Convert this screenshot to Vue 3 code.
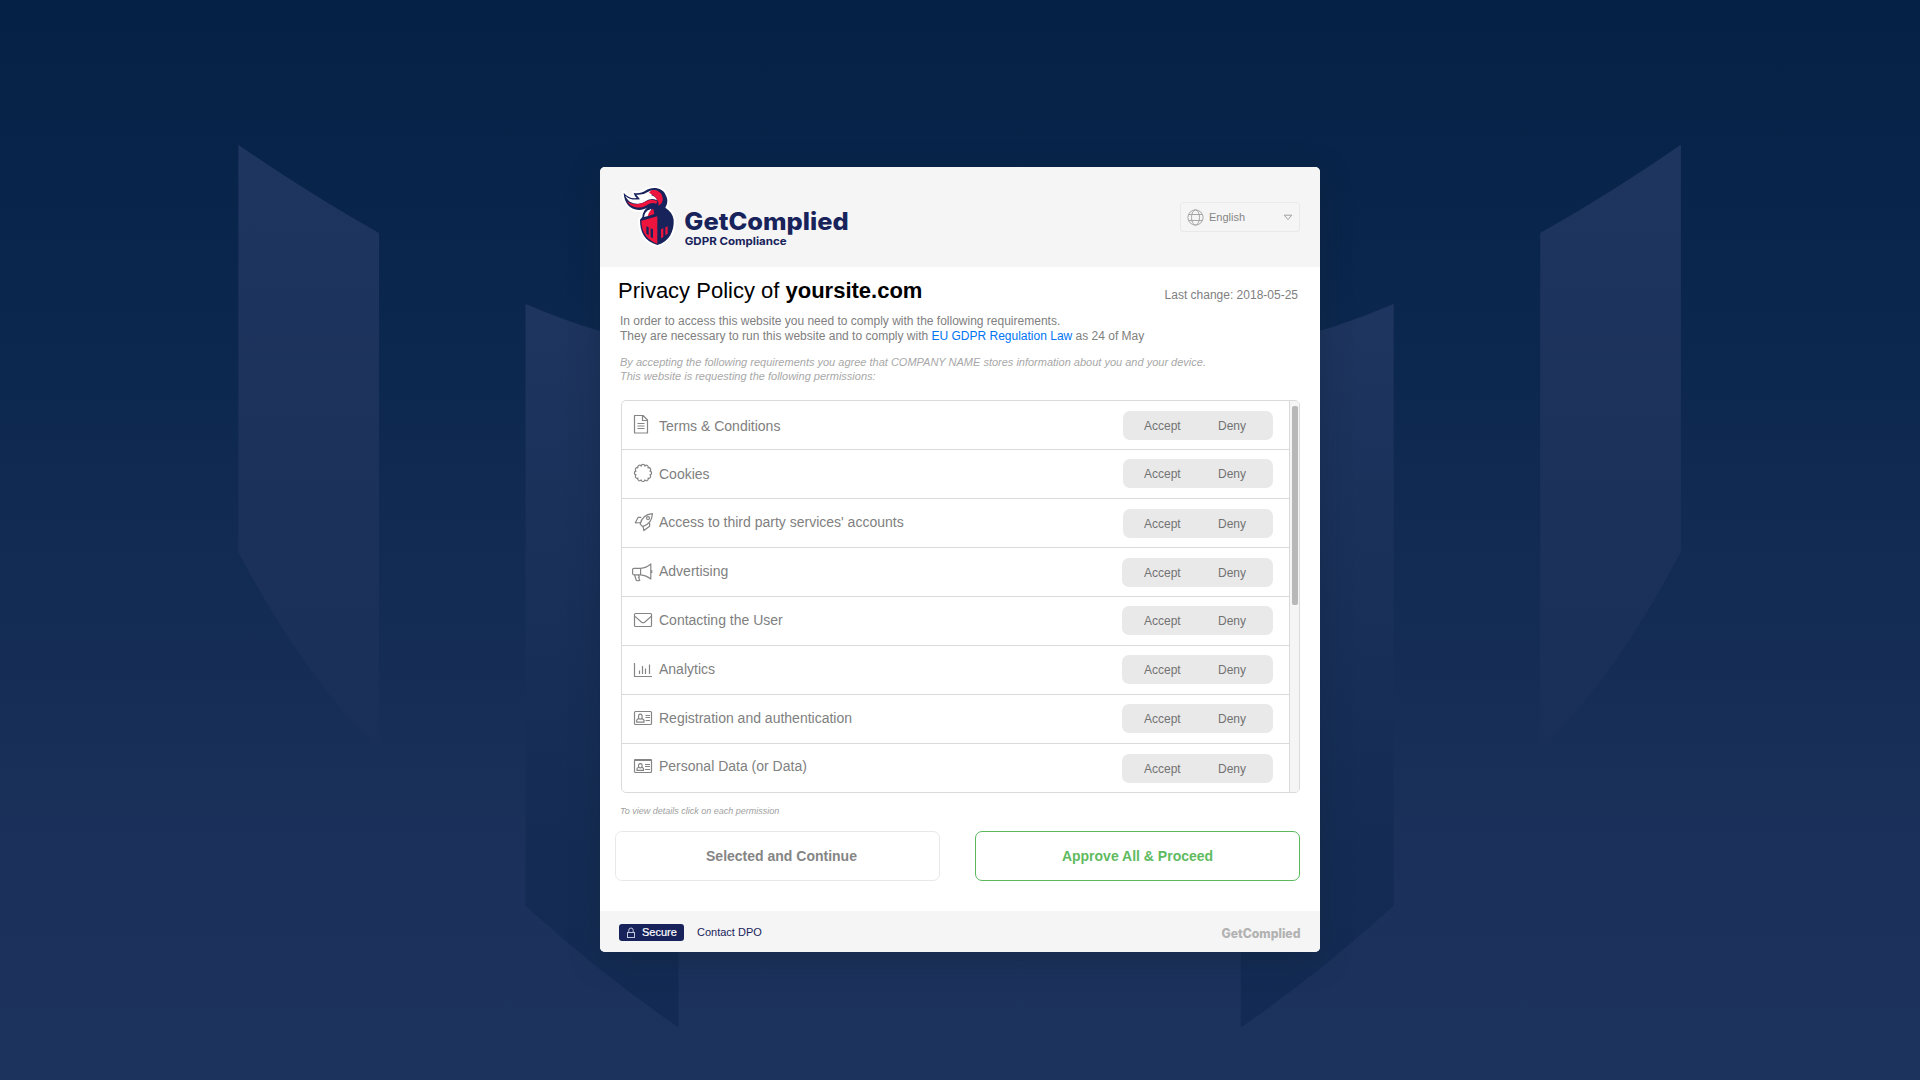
<script setup>
const permissions = [
  { icon: 'document', label: 'Terms & Conditions', text: 1, pill: 10, wide: false },
  { icon: 'cookie', label: 'Cookies', text: 0, pill: 9, wide: false },
  { icon: 'rocket', label: "Access to third party services' accounts", text: -1, pill: 10, wide: false },
  { icon: 'megaphone', label: 'Advertising', text: -1, pill: 10, wide: true },
  { icon: 'envelope', label: 'Contacting the User', text: -1, pill: 9, wide: true },
  { icon: 'chart', label: 'Analytics', text: -1, pill: 9, wide: true },
  { icon: 'card', label: 'Registration and authentication', text: -1, pill: 9, wide: true },
  { icon: 'badge', label: 'Personal Data (or Data)', text: -2, pill: 10, wide: true },
]

const cookiePath = (() => {
  const n = 12
  const pt = (i) => {
    const a = (i / n) * Math.PI * 2 - Math.PI / 2 + Math.PI / n
    return `${(13 + 7.2 * Math.cos(a)).toFixed(2)} ${(23 + 7.2 * Math.sin(a)).toFixed(2)}`
  }
  let d = `M${pt(0)}`
  for (let i = 1; i <= n; i++) d += `A1.9 2.1 ${((i - 0.5) / n) * 360 + 15} 0 1 ${pt(i)}`
  return d + 'Z'
})()
</script>

<template>
  <div class="page">
    <svg class="backdrop" viewBox="0 0 1920 1080" aria-hidden="true">
      <defs>
        <linearGradient id="outer" gradientUnits="userSpaceOnUse" x1="0" y1="145" x2="0" y2="750">
          <stop offset="0" stop-color="#1e355f" />
          <stop offset="1" stop-color="#192f58" />
        </linearGradient>
        <linearGradient id="inner" gradientUnits="userSpaceOnUse" x1="0" y1="304" x2="0" y2="1028">
          <stop offset="0" stop-color="#1e355f" />
          <stop offset="0.75" stop-color="#142c54" />
          <stop offset="1" stop-color="#132b54" />
        </linearGradient>
        <g id="wing">
          <path fill="url(#outer)" d="M238.3 144.7Q308 193 379 233V749Q306 680 238.3 552Z" />
          <path fill="url(#inner)" d="M525.5 304Q600 336 678.5 350V1027.6Q602 975 525.5 906Z" />
        </g>
      </defs>
      <use href="#wing" />
      <use href="#wing" transform="matrix(-1 0 0 1 1919.2 0)" />
    </svg>

    <main class="card">
      <header class="head">
        <svg class="logo" viewBox="0 0 780 255">
          <g stroke="#fff" stroke-width="12" stroke-linejoin="round" fill="#fff">
            <path d="M41 53C43 84 58 103 87 105C98 105 108 101 114 97Q98 107 97 126L90 134C90 172 104 198 142 210C178 200 193 168 191 134Q188 112 166 98Q178 78 167 60C158 37 126 34 106 47C98 53 86 56 71 54Q74 65 80 69Q56 72 41 53Z" />
          </g>
          <path fill="#18235b" d="M41 53C43 84 58 103 87 105C98 105 108 101 114 97Q98 107 97 126L90 134C90 172 104 198 142 210C178 200 193 168 191 134Q188 112 166 98Q178 78 167 60C158 37 126 34 106 47C98 53 86 56 71 54Q74 65 80 69Q56 72 41 53Z" />
          <path fill="#fff" d="M46 62Q60 77 90 73L79 59Q100 61 113 51Q128 42 144 49Q128 50 124 61Q138 64 141 76Q122 67 104 80C80 93 54 84 46 62Z" />
          <path fill="#ed143d" d="M124 46C144 42 156 54 158 70Q160 84 146 92Q146 66 117 53ZM50 78C66 90 86 90 104 81Q124 68 142 79L139 86Q122 80 108 92C86 103 62 97 50 78Z" />
          <path fill="#fff" d="M102 126Q103 108 124 101L117 122Z" />
          <path fill="#ed143d" d="M130 101L133 117L113 124Q116 108 130 101Z" />
          <path fill="#ed143d" d="M94 137L142 124V206C111 195 95 174 94 137Z" />
          <path fill="#18235b" d="M109 154L116 157V181L109 176ZM122 160L129 163V190L122 186Z" />
          <path fill="#ed143d" d="M153 163L160 160V186L153 190ZM166 157L173 154V176L166 181Z" />
          <text x="223" y="165" textLength="493" lengthAdjust="spacingAndGlyphs" class="brand">GetComplied</text>
          <text x="224" y="209" textLength="306" lengthAdjust="spacingAndGlyphs" class="tagline">GDPR Compliance</text>
        </svg>
        <div class="language">
          <svg width="17" height="17" viewBox="0 0 17 17" fill="none" stroke="#a6a6a6">
            <circle cx="8.5" cy="8.5" r="7.6" />
            <ellipse cx="8.5" cy="8.5" rx="4" ry="7.6" />
            <path d="M1.6 5.5H15.4M1.6 11.5H15.4" />
          </svg>
          <span>English</span>
          <svg class="caret" width="10" height="7" viewBox="0 0 10 7" fill="none" stroke="#a0a0a0" stroke-linejoin="round">
            <path d="M1.2 1.2H8.8L5 5.6Z" />
          </svg>
        </div>
      </header>

      <section class="body">
        <div class="title-row">
          <h1>Privacy Policy of <b>yoursite.com</b></h1>
          <span class="changed">Last change: 2018-05-25</span>
        </div>
        <p class="intro">
          In order to access this website you need to comply with the following requirements.<br />
          They are necessary to run this website and to comply with <a>EU GDPR Regulation Law</a> as 24 of May
        </p>
        <p class="consent">
          By accepting the following requirements you agree that COMPANY NAME stores information about you and your device.<br />
          This website is requesting the following permissions:
        </p>

        <div class="panel">
          <ul class="list">
            <li v-for="p in permissions" :key="p.icon">
              <svg class="icon" width="24" height="48" viewBox="0 0 24 48">
                <g v-if="p.icon === 'document'">
                  <path d="M4.5 14.5H13L17.5 19V32H4.5ZM12.5 14.8V19.5H17.2" />
                  <path d="M7.5 22.5H14.5M7.5 25H14.5M7.5 27.5H14.5" />
                </g>
                <path v-else-if="p.icon === 'cookie'" :d="cookiePath" />
                <g v-else-if="p.icon === 'rocket'">
                  <path d="M10.2 25.2Q12.3 15.4 22.4 14.6Q22.2 24.8 12.6 27.6ZM11.3 18.3H8.2L5.3 23.8L10.4 23.5M19.6 24V27.3L13.9 31.6L13.1 27.5" />
                  <circle cx="18" cy="19.1" r="1.5" />
                </g>
                <g v-else-if="p.icon === 'megaphone'">
                  <path d="M10.6 20.4H3.8Q2.6 20.4 2.6 21.6V25.6Q2.6 26.8 3.8 26.8H10.6ZM10.6 20.4Q16.2 20 20.8 16V31Q16.2 27.2 10.6 26.8M4.6 27L6.3 32.2Q8 33.3 9.8 32.2L8.6 29.8L9.3 29L8.3 27M21.7 22.3V24.9" />
                </g>
                <g v-else-if="p.icon === 'envelope'">
                  <rect x="4.5" y="16.5" width="17" height="13" rx="1" />
                  <path d="M5 19.4L11.6 25.2Q13.1 26.3 14.6 25.2L21.2 19.4" />
                </g>
                <g v-else-if="p.icon === 'chart'">
                  <path d="M4.5 17V30.5H22M9.5 28V24.5M12.5 28V20M15.5 28V22.5M19.5 28V18.5" />
                </g>
                <g v-else>
                  <rect x="4.5" :y="p.icon === 'card' ? 16.5 : 15.5" width="17" height="13" rx="1" />
                  <path v-if="p.icon === 'badge'" d="M4.5 16H21.5" stroke-width="2" />
                  <path v-if="p.icon === 'card'" d="M8.7 23.2Q7.9 19.2 10.3 19.2Q12.8 19.2 11.9 23.2L14 25.2V27.2H6.7V25.2ZM8.7 23.4Q10.3 25 11.9 23.4M15.5 20.5H20M15.5 22.5H20M15.5 25.5H20" />
                  <path v-else d="M8.7 22.9Q7.9 19.6 10.3 19.6Q12.8 19.6 11.9 22.9L13.5 24.6V26.4H7V24.6ZM8.7 23.1Q10.3 24.6 11.9 23.1M15 20.5H20M15 22.5H20M15 25.5H20" />
                </g>
              </svg>
              <span class="label" :style="{ top: p.text + 'px' }">{{ p.label }}</span>
              <div class="pill" :class="{ wide: p.wide }" :style="{ marginTop: p.pill + 'px' }">
                <span>Accept</span><span>Deny</span>
              </div>
            </li>
          </ul>
          <div class="track"><div class="thumb"></div></div>
        </div>

        <p class="hint">To view details click on each permission</p>
        <div class="actions">
          <button class="plain">Selected and Continue</button>
          <button class="approve">Approve All &amp; Proceed</button>
        </div>
      </section>

      <footer class="foot">
        <span class="secure">
          <svg width="10" height="12" viewBox="0 0 10 12" fill="none" stroke="#c3c7da">
            <rect x="1.5" y="5.5" width="7" height="5" />
            <path d="M2.8 5.3V3.2Q2.8 1 5 1Q7.2 1 7.2 3.2V5.3" />
          </svg>
          Secure
        </span>
        <a class="dpo">Contact DPO</a>
        <svg class="mark" width="80" height="18" viewBox="0 0 80 18">
          <text x="0.5" y="14" textLength="79" lengthAdjust="spacingAndGlyphs">GetComplied</text>
        </svg>
      </footer>
    </main>
  </div>
</template>

<style>
body {
  margin: 0;
}
</style>

<style scoped>
.page {
  position: relative;
  width: 1920px;
  height: 1080px;
  overflow: hidden;
  box-sizing: border-box;
  padding-top: 167px;
  background: linear-gradient(#052146, #0a264c 26%, #1b315b 80%, #1c335e);
  font-family: 'Liberation Sans', Arial, sans-serif;
}
.backdrop {
  position: absolute;
  inset: 0;
}
.card {
  position: relative;
  display: flex;
  flex-direction: column;
  width: 720px;
  height: 785px;
  margin: 0 auto;
  border-radius: 5px;
  overflow: hidden;
  background: #fff;
  box-shadow: 0 8px 30px rgba(20, 34, 52, 0.42);
}
.head {
  display: flex;
  justify-content: space-between;
  height: 100px;
  background: #f5f5f5;
}
.logo {
  width: 260px;
  height: 85px;
  margin: 8px 0 0 10px;
}
.brand,
.tagline,
.mark text {
  font-family: Inter, 'Liberation Sans', sans-serif;
  font-weight: 800;
}
.brand {
  font-size: 72px;
  fill: #18235b;
}
.tagline {
  font-size: 33px;
  font-weight: 700;
  fill: #18235b;
}
.language {
  display: flex;
  align-items: center;
  box-sizing: border-box;
  width: 120px;
  height: 30px;
  margin: 35px 20px 0 0;
  padding: 0 6px;
  border: 1px solid #e9e9e9;
  border-radius: 3px;
  font-size: 11px;
  color: #858585;
}
.language span {
  margin-left: 5px;
}
.caret {
  margin-left: auto;
}
.body {
  height: 644px;
}
.title-row {
  display: flex;
  justify-content: space-between;
  align-items: baseline;
  height: 47px;
  padding: 11px 22px 0 18px;
  box-sizing: border-box;
}
h1 {
  margin: 0;
  font-size: 22px;
  line-height: 26px;
  font-weight: 400;
  color: #000;
}
.changed {
  position: relative;
  top: 1px;
  font-size: 12px;
  color: #808080;
}
.intro,
.consent,
.hint {
  margin: 0;
  white-space: nowrap;
}
.intro {
  padding-left: 20px;
  font-size: 12px;
  line-height: 15px;
  color: #808080;
}
.intro a {
  color: #0075f2;
}
.consent {
  margin-top: 11px;
  padding-left: 20px;
  font-size: 11px;
  line-height: 14px;
  font-style: italic;
  color: #a8a8a8;
}
.panel {
  display: flex;
  box-sizing: border-box;
  width: 679px;
  height: 393px;
  margin: 17px 0 0 21px;
  border: 1px solid #dadada;
  border-radius: 5px;
  overflow: hidden;
}
.list {
  flex: 1;
  margin: 0;
  padding: 0;
  list-style: none;
}
li {
  display: flex;
  align-items: flex-start;
  height: 48px;
  border-bottom: 1px solid #dadada;
}
.icon {
  margin-left: 8px;
  fill: none;
  stroke: #858585;
  stroke-width: 1.2;
  stroke-linejoin: round;
}
.label {
  position: relative;
  margin: 15px auto 0 5px;
  font-size: 14px;
  line-height: 18px;
  color: #808080;
}
.pill {
  display: flex;
  align-items: center;
  box-sizing: border-box;
  width: 150px;
  height: 29px;
  margin-right: 16px;
  padding-left: 21px;
  border-radius: 7px;
  background: #e9e9e9;
  font-size: 12px;
  color: #737373;
}
.pill.wide {
  width: 151px;
  padding-left: 22px;
}
.pill span:first-child {
  width: 74px;
}
.track {
  width: 10px;
  border-left: 1px solid #dadada;
  background: #f5f5f5;
  padding-top: 5px;
  box-sizing: border-box;
}
.thumb {
  width: 6px;
  height: 199px;
  margin-left: 1.5px;
  border-radius: 2px;
  background: #b8b8b8;
}
.hint {
  margin-top: 13px;
  padding-left: 20px;
  font-size: 9px;
  line-height: 11px;
  font-style: italic;
  color: #a0a0a0;
}
.actions {
  display: flex;
  gap: 35px;
  margin: 14px 20px 0 15px;
}
button {
  box-sizing: border-box;
  width: 325px;
  height: 50px;
  padding: 0;
  border: 1px solid #e8e8e8;
  border-radius: 7px;
  background: #fff;
  font: 700 14px 'Liberation Sans', Arial, sans-serif;
  color: #858585;
}
.plain {
  padding-left: 8px;
}
.approve {
  border-color: #5cb85c;
  color: #5fbb5f;
}
.foot {
  display: flex;
  align-items: flex-start;
  height: 41px;
  padding: 0 19px;
  background: #f5f5f5;
  font-size: 11px;
  line-height: 17px;
  color: #18235b;
}
.secure {
  display: flex;
  align-items: center;
  box-sizing: border-box;
  width: 65px;
  height: 17px;
  margin-top: 13px;
  padding-left: 7px;
  gap: 6px;
  border-radius: 3px;
  background: #18235b;
  color: #fff;
  -webkit-text-stroke: 0.2px #fff;
}
.dpo {
  margin: 13px auto 0 13px;
}
.mark {
  margin-top: 13px;
}
.mark text {
  font-size: 12.5px;
  fill: #b2b2b2;
}
</style>
